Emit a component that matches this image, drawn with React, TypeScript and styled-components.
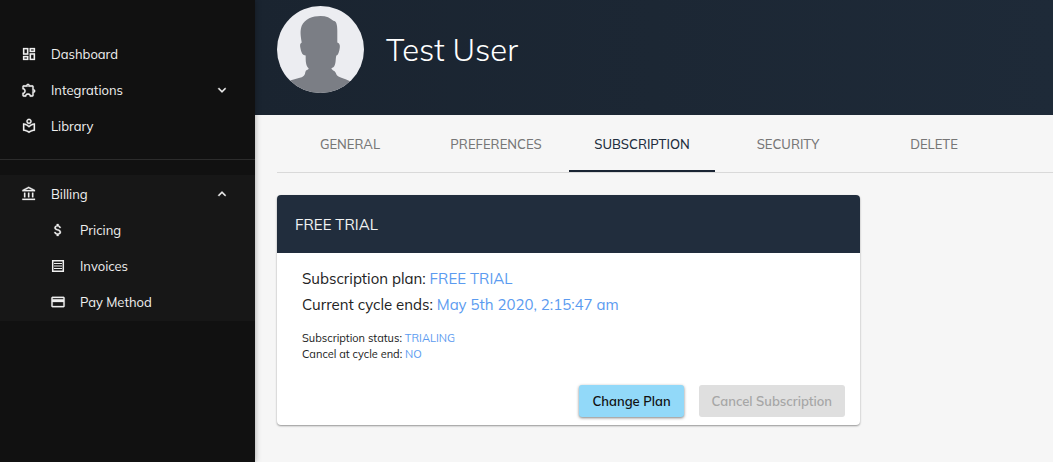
import React, { useState } from "react";
import styled, { createGlobalStyle } from "styled-components";
import {
  MdOutlineDashboard,
  MdOutlineExtension,
  MdOutlineLocalLibrary,
  MdOutlineAccountBalance,
  MdAttachMoney,
  MdOutlinePayment,
  MdExpandMore,
  MdExpandLess,
} from "react-icons/md";

const GlobalStyle = createGlobalStyle`
  *, *::before, *::after { box-sizing: border-box; }
  body {
    margin: 0;
    background: #f6f6f6;
    color: #222;
    font-family: Muli, Mulish, Lato, "Liberation Sans", sans-serif;
    font-size: 13px;
  }
`;

const Page = styled.div`
  display: flex;
  min-height: 100vh;
`;

const Sidebar = styled.nav`
  flex: 0 0 255px;
  padding-top: 36px;
  background: #111;
  color: #f0f0f0;
  box-shadow: 0 0 6px rgba(0, 0, 0, 0.35);
  z-index: 1;
`;

const NavList = styled.ul`
  margin: 0;
  padding: 0;
  list-style: none;
`;

const Divider = styled.hr`
  height: 1px;
  margin: 15px 0;
  border: 0;
  background: #2c2c2c;
`;

const NavGroup = styled.div`
  padding: 1px 0;
  background: #171717;
`;

const NavItem = styled.a<{ $nested?: boolean }>`
  display: flex;
  align-items: center;
  gap: 14px;
  width: 100%;
  height: 36px;
  padding: 0 25px 0 ${(p) => (p.$nested ? 50 : 21)}px;
  border: 0;
  background: none;
  color: inherit;
  font: inherit;
  text-align: left;
  text-decoration: none;
  cursor: pointer;

  svg {
    flex: none;
    stroke-width: 0.4;
  }

  path[fill="none"] {
    stroke: none;
  }
`;

const NavLabel = styled.span`
  flex: 1;
`;

const Main = styled.main`
  flex: 1;
  min-width: 0;
`;

const Banner = styled.header`
  display: flex;
  align-items: center;
  gap: 22px;
  height: 115px;
  padding: 0 22px 16px;
  background: linear-gradient(90deg, #1a2430, #1e2a38);
  color: #fff;
`;

const Avatar = styled.svg`
  width: 87px;
  height: 87px;
  border-radius: 50%;
`;

const UserName = styled.h1`
  margin: 0;
  font-size: 31px;
  font-weight: 300;
  line-height: 40px;
`;

const Content = styled.div`
  padding-left: 22px;
`;

const Tabs = styled.div`
  display: flex;
  height: 58px;
  border-bottom: 1px solid #d9d9d9;
`;

const Tab = styled.button<{ $active: boolean }>`
  flex: 0 1 146px;
  padding: 2px 0 0;
  border: 0;
  border-bottom: 2px solid ${(p) => (p.$active ? "#1a2433" : "transparent")};
  background: none;
  color: ${(p) => (p.$active ? "#212d3d" : "#777")};
  font: inherit;
  font-weight: 500;
  cursor: pointer;
`;

const Card = styled.section`
  max-width: 583px;
  margin: 22px 22px 22px 0;
  border-radius: 4px;
  background: #fff;
  box-shadow: 0 1px 2px rgba(0, 0, 0, 0.4);
`;

const CardTitle = styled.h2`
  margin: 0;
  padding: 1px 18px 0;
  border-radius: 4px 4px 0 0;
  background: #212d3d;
  color: #f2f2f2;
  font-size: 15px;
  font-weight: 400;
  line-height: 57px;
`;

const CardBody = styled.div`
  padding: 13px 25px 0;
`;

const Detail = styled.p`
  margin: 0;
  font-size: 15px;
  line-height: 26px;
`;

const Notes = styled.div`
  padding: 12px 0 23px;
`;

const Note = styled.p`
  margin: 0;
  font-size: 11px;
  line-height: 16px;
`;

const Value = styled.span`
  color: #5b9bf0;
`;

const Actions = styled.div`
  display: flex;
  justify-content: flex-end;
  gap: 15px;
  padding: 0 15px 8px;
`;

const ActionButton = styled.button`
  height: 32px;
  padding: 0 13px;
  border: 0;
  border-radius: 3px;
  background: #92d9f9;
  color: #111;
  font: inherit;
  font-weight: 600;
  box-shadow: 0 1px 3px rgba(0, 0, 0, 0.5);
  cursor: pointer;

  &:disabled {
    background: #dfdfdf;
    color: #a6a6a6;
    box-shadow: none;
    cursor: default;
  }
`;

const InvoiceIcon = () => (
  <svg width="16" height="16" viewBox="0 0 16 16" fill="none" stroke="currentColor" aria-hidden="true">
    <path strokeWidth="1.5" d="M2.7 2.7h10.6v10.6H2.7z" />
    <path strokeWidth="1" d="M4 5.5h8M4 8h8M4 10.5h8" />
  </svg>
);

const tabs = ["GENERAL", "PREFERENCES", "SUBSCRIPTION", "SECURITY", "DELETE"];

export default function App() {
  const [active, setActive] = useState("SUBSCRIPTION");
  const [open, setOpen] = useState(true);
  return (
    <>
      <GlobalStyle />
      <Page>
        <Sidebar>
          <NavList>
            <li>
              <NavItem href="#dashboard">
                <MdOutlineDashboard size={16} />
                <NavLabel>Dashboard</NavLabel>
              </NavItem>
            </li>
            <li>
              <NavItem as="button" type="button" aria-expanded={false}>
                <MdOutlineExtension size={16} />
                <NavLabel>Integrations</NavLabel>
                <MdExpandMore size={16} />
              </NavItem>
            </li>
            <li>
              <NavItem href="#library">
                <MdOutlineLocalLibrary size={16} />
                <NavLabel>Library</NavLabel>
              </NavItem>
            </li>
          </NavList>
          <Divider />
          <NavGroup>
            <NavItem as="button" type="button" aria-expanded={open} onClick={() => setOpen(!open)}>
              <MdOutlineAccountBalance size={16} />
              <NavLabel>Billing</NavLabel>
              {open ? <MdExpandLess size={16} /> : <MdExpandMore size={16} />}
            </NavItem>
            {open && (
              <NavList>
                <li>
                  <NavItem $nested href="#pricing">
                    <MdAttachMoney size={16} />
                    <NavLabel>Pricing</NavLabel>
                  </NavItem>
                </li>
                <li>
                  <NavItem $nested href="#invoices">
                    <InvoiceIcon />
                    <NavLabel>Invoices</NavLabel>
                  </NavItem>
                </li>
                <li>
                  <NavItem $nested href="#pay-method">
                    <MdOutlinePayment size={16} />
                    <NavLabel>Pay Method</NavLabel>
                  </NavItem>
                </li>
              </NavList>
            )}
          </NavGroup>
        </Sidebar>
        <Main>
          <Banner>
            <Avatar viewBox="0 0 88 88" role="img" aria-label="Test User">
              <rect width="88" height="88" fill="#ecedf1" />
              <path
                fill="#7b7e85"
                d="M25 37C24 31 23 25 25 20C28 13 36 10 44 10C50 10 54 12 57 15C60 15 61 19 61 25L61 37C64 38 64 41 63 45C62 49 61 50 60 50C59 54 60 59 57 62L55 63C56 66 59 65 60 69C61 72 68 73 74 76L88 88H0L14 75C18 74 21 73 25 72C29 70 28 68 29 66C30 64 32 65 32 63C29 60 29 56 29 50C26 50 25 48 24 44C23 40 23 38 25 37Z"
              />
            </Avatar>
            <UserName>Test User</UserName>
          </Banner>
          <Content>
            <Tabs role="tablist">
              {tabs.map((name) => (
                <Tab
                  key={name}
                  type="button"
                  role="tab"
                  aria-selected={active === name}
                  $active={active === name}
                  onClick={() => setActive(name)}
                >
                  {name}
                </Tab>
              ))}
            </Tabs>
            <Card>
              <CardTitle>FREE TRIAL</CardTitle>
              <CardBody>
                <Detail>
                  Subscription plan: <Value>FREE TRIAL</Value>
                </Detail>
                <Detail>
                  Current cycle ends: <Value>May 5th 2020, 2:15:47 am</Value>
                </Detail>
                <Notes>
                  <Note>
                    Subscription status: <Value>TRIALING</Value>
                  </Note>
                  <Note>
                    Cancel at cycle end: <Value>NO</Value>
                  </Note>
                </Notes>
              </CardBody>
              <Actions>
                <ActionButton type="button">Change Plan</ActionButton>
                <ActionButton type="button" disabled>
                  Cancel Subscription
                </ActionButton>
              </Actions>
            </Card>
          </Content>
        </Main>
      </Page>
    </>
  );
}
